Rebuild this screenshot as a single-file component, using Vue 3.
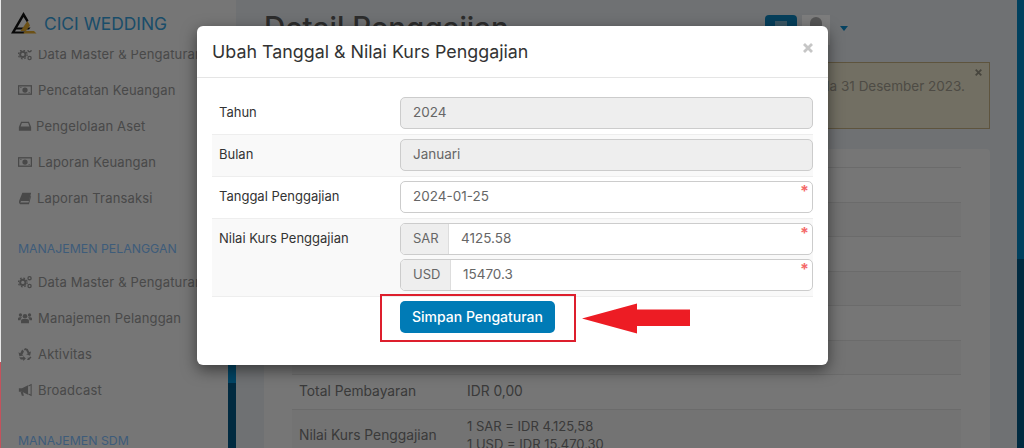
<script setup>
const groups = [
  {
    title: '',
    items: [
      { label: 'Data Master & Pengaturan', icon: 'cogs' },
      { label: 'Pencatatan Keuangan', icon: 'money' },
      { label: 'Pengelolaan Aset', icon: 'inbox', space: 'tight' },
      { label: 'Laporan Keuangan', icon: 'money' },
      { label: 'Laporan Transaksi', icon: 'book', space: 'mid' }
    ]
  },
  {
    title: 'MANAJEMEN PELANGGAN',
    items: [
      { label: 'Data Master & Pengaturan', icon: 'cogs' },
      { label: 'Manajemen Pelanggan', icon: 'users' },
      { label: 'Aktivitas', icon: 'recycle' },
      { label: 'Broadcast', icon: 'bullhorn' }
    ]
  },
  { title: 'MANAJEMEN SDM', items: [] }
]

const blankRows = [1, 2, 3, 4, 5, 6]
</script>

<template>
  <div class="page">
    <div class="edge"><i class="edge-top"></i><i class="edge-bottom"></i></div>

    <div class="app">
      <aside class="sidebar">
        <div class="brand">
          <svg class="logo" viewBox="0 0 26 22" width="26" height="22">
            <path d="M12.5 0 L0 21.5 H13 L14.5 19.5 H4 L12.5 5 L16 10.5 L17.5 8.5 Z" fill="#111" />
            <path d="M5 15.5 H19.5 L18 17.5 H5 Z" fill="#111" />
            <path d="M9.5 19 L16.5 9 L19 13.5 L15 19 Z" fill="#d9a22c" />
            <path d="M12 21.5 L14 19 H23 L25.5 21.5 Z" fill="#d9a22c" />
          </svg>
          <span class="brand-name">CICI WEDDING</span>
        </div>
        <div class="side-body">
          <nav class="nav">
            <section v-for="(group, g) in groups" :key="g" class="group">
              <h4 v-if="group.title" class="group-title">{{ group.title }}</h4>
              <a v-for="item in group.items" :key="item.label + item.icon" class="item" :class="item.space">
                <svg class="ico" viewBox="0 0 16 16" width="14" height="14">
                  <template v-if="item.icon === 'cogs'">
                    <circle cx="5.5" cy="8.5" r="3" fill="none" stroke="currentColor" stroke-width="2.2" />
                    <circle cx="5.5" cy="8.5" r="5" fill="none" stroke="currentColor" stroke-width="1.4" stroke-dasharray="2 1.93" />
                    <circle cx="13.2" cy="3.6" r="1.8" fill="none" stroke="currentColor" stroke-width="1.5" />
                    <circle cx="13.2" cy="12.6" r="1.8" fill="none" stroke="currentColor" stroke-width="1.5" />
                  </template>
                  <template v-else-if="item.icon === 'money'">
                    <rect x=".7" y="3.2" width="14.6" height="9.6" fill="none" stroke="currentColor" stroke-width="1.5" />
                    <circle cx="8" cy="8" r="3" fill="currentColor" />
                    <path d="M2.5 5 H4 M12 11 H13.5" stroke="currentColor" />
                  </template>
                  <template v-else-if="item.icon === 'inbox'">
                    <path d="M3.5 3 H12.5 L15 9 V13.5 H1 V9 Z" fill="currentColor" />
                    <path d="M4.4 4.6 H11.6 L13 8.6 H3 Z" fill="#eaeaea" />
                  </template>
                  <template v-else-if="item.icon === 'book'">
                    <path d="M5 2 H15 L12.5 11.5 H3.5 L2.6 13 H12 L14.5 5 L15 6 L12.5 15 H2.5 Q.6 14.5 1.2 11.5 Z" fill="currentColor" />
                  </template>
                  <template v-else-if="item.icon === 'users'">
                    <circle cx="8" cy="6" r="2.6" fill="currentColor" />
                    <circle cx="2.8" cy="4.6" r="1.9" fill="currentColor" />
                    <circle cx="13.2" cy="4.6" r="1.9" fill="currentColor" />
                    <path d="M3.5 14 V10.5 Q4 9 6 9 H10 Q12 9 12.5 10.5 V14 Z" fill="currentColor" />
                    <path d="M0 10.5 V8.4 Q.4 7 2 7 H4.6 L3 9 V10.5 Z M16 10.5 V8.4 Q15.6 7 14 7 H11.4 L13 9 V10.5 Z" fill="currentColor" />
                  </template>
                  <template v-else-if="item.icon === 'recycle'">
                    <path d="M8 1 L11.2 2.2 L12.8 5.8 L14.8 5 L13.8 10 L9.4 8.2 L11.2 7.4 L9.2 3.6 H6.4 Z" fill="currentColor" />
                    <path d="M4.8 2.8 L6.8 5.2 L4.9 8.8 L6.4 9.8 L1.6 10.7 L.6 6 L2.5 7 Z" fill="currentColor" />
                    <path d="M1.4 11.8 H6 V10.2 L9 13.2 L6 16 V14.4 H3.2 Z M14 10.8 L15.4 11.8 L12.8 14.8 H10.2 L11.4 13 L10.6 12.4 H12.6 Z" fill="currentColor" />
                  </template>
                  <template v-else>
                    <path d="M1 6 H4.5 L11.5 2.6 V13.4 L4.5 10 H1 Z" fill="currentColor" />
                    <path d="M3 10 H5.4 L6.8 14.6 H4.4 Z" fill="currentColor" />
                    <path d="M12 3.4 L15 1.8 V14.2 L12 12.6" fill="none" stroke="currentColor" stroke-width="1.2" />
                  </template>
                </svg>
                <span>{{ item.label }}</span>
              </a>
            </section>
          </nav>
          <div class="rail"><i class="rail-light"></i><i class="rail-dark"></i></div>
        </div>
      </aside>

      <main class="main">
        <header class="topbar">
          <h1 class="page-title">Detail Penggajian</h1>
          <div class="top-actions">
            <span class="top-btn"><i></i></span>
            <span class="avatar"><i></i></span>
            <span class="caret"></span>
          </div>
        </header>

        <div class="alert">
          <span class="alert-text">Penggajian bulan ini dihitung berdasarkan data sampai pada 31 Desember 2023.</span>
          <svg class="alert-x" viewBox="0 0 10 10" width="7" height="7">
            <path d="M1 1 L9 9 M9 1 L1 9" stroke="currentColor" stroke-width="2.6" />
          </svg>
        </div>

        <div class="card">
          <div v-for="n in blankRows" :key="n" class="row"></div>
          <div class="row">
            <span class="row-label">Total Pembayaran</span>
            <span class="row-value">IDR 0,00</span>
          </div>
          <div class="row row-last">
            <span class="row-label">Nilai Kurs Penggajian</span>
            <span class="rates">1 SAR = IDR 4.125,58<br />1 USD = IDR 15.470,30</span>
          </div>
        </div>
      </main>

      <div class="rail rail-right"><i class="rail-light"></i><i class="rail-dark"></i></div>

      <div class="overlay">
        <div class="modal">
          <div class="modal-header">
            <h3 class="modal-title">Ubah Tanggal &amp; Nilai Kurs Penggajian</h3>
            <svg class="modal-x" viewBox="0 0 10 10" width="10" height="10">
              <path d="M1 1 L9 9 M9 1 L1 9" stroke="currentColor" stroke-width="2.8" />
            </svg>
          </div>

          <div class="modal-body">
            <div class="form-row">
              <label>Tahun</label>
              <div class="fields"><div class="input disabled">2024</div></div>
            </div>
            <div class="form-row striped">
              <label>Bulan</label>
              <div class="fields"><div class="input disabled">Januari</div></div>
            </div>
            <div class="form-row">
              <label>Tanggal Penggajian</label>
              <div class="fields"><div class="input">2024-01-25<b class="req">*</b></div></div>
            </div>
            <div class="form-row striped closing">
              <label>Nilai Kurs Penggajian</label>
              <div class="fields">
                <div class="input group-input">
                  <span class="addon">SAR</span>
                  <span class="value">4125.58</span>
                  <b class="req">*</b>
                </div>
                <div class="input group-input">
                  <span class="addon addon-wide">USD</span>
                  <span class="value">15470.3</span>
                  <b class="req">*</b>
                </div>
              </div>
            </div>
            <div class="actions">
              <button class="save" type="button">Simpan Pengaturan</button>
            </div>
          </div>

          <!-- anotasi screenshot -->
          <div class="mark-box"></div>
          <svg class="mark-arrow" viewBox="0 0 109 31" width="109" height="31">
            <path d="M0 15.5 L55 0.5 V6.5 H108 V23 H55 V30.5 Z" fill="#ed1c24" />
          </svg>
        </div>
      </div>
    </div>
  </div>
</template>

<style>
html, body {
  margin: 0;
  overflow: hidden;
}
</style>

<style scoped>
.page {
  display: flex;
  width: 1024px;
  height: 448px;
  overflow: hidden;
  font-family: Inter, "Noto Sans", sans-serif;
}

.edge {
  display: flex;
  flex-direction: column;
  width: 1px;
  flex: none;
}
.edge-top { height: 362px; background: #e8e8e8; }
.edge-bottom { flex: 1; background: #c4525c; }

.app {
  position: relative;
  display: flex;
  flex: 1;
  min-width: 0;
  background: #dfe3e7;
}

/* sidebar */
.sidebar {
  display: flex;
  flex-direction: column;
  width: 235px;
  flex: none;
  background: #ececec;
}
.brand {
  position: relative;
  z-index: 1;
  display: flex;
  align-items: center;
  box-sizing: border-box;
  height: 50px;
  padding: 0 0 4px 10px;
  background: #ececec;
  flex: none;
}
.brand-name {
  margin-left: 7px;
  font-size: 17.4px;
  color: #359ad4;
}
.side-body {
  display: flex;
  flex: 1;
  min-height: 0;
}
.nav {
  flex: 1;
  min-width: 0;
  margin-top: -14px;
}
.group-title {
  margin: 18px 0 0;
  padding-left: 17px;
  height: 30px;
  line-height: 30px;
  font-size: 12.3px;
  font-weight: 400;
  color: #7cb8f4;
  white-space: nowrap;
}
.item {
  display: flex;
  align-items: center;
  gap: 6px;
  height: 36px;
  padding-left: 17px;
  font-size: 13px;
  letter-spacing: 0.17px;
  color: #929292;
  white-space: nowrap;
}
.item.tight { gap: 4px; }
.item.mid { gap: 5px; }
.ico { flex: none; }

.rail {
  display: flex;
  flex-direction: column;
  width: 8px;
  flex: none;
}
.rail i { display: block; }
.rail-light { height: 333px; background: #0088c8; }
.rail-dark { flex: 1; background: #005580; }
.rail-right { width: 7px; }
.rail-right .rail-light { height: 259px; background: #0080bc; }

/* main */
.main {
  flex: 1;
  min-width: 0;
}
.topbar {
  display: flex;
  justify-content: space-between;
  height: 62px;
  padding: 0 169px 0 28px;
}
.page-title {
  margin: 9px 0 0;
  font-size: 29.5px;
  font-weight: 500;
  color: #585858;
  white-space: nowrap;
}
.top-actions {
  display: flex;
  align-items: flex-start;
  margin-top: 15px;
}
.top-btn {
  display: block;
  width: 32px;
  height: 30px;
  border-radius: 4px;
  background: #0c7fb6;
}
.top-btn i {
  display: block;
  width: 12px;
  height: 8px;
  margin: 6px auto 0;
  background: #74aecb;
}
.avatar {
  display: block;
  width: 28px;
  height: 30px;
  margin-left: 5px;
  background: #fafafa;
}
.avatar i {
  display: block;
  width: 12px;
  height: 22px;
  margin: 2px auto 0;
  border-radius: 6px;
  background: #aaa;
}
.caret {
  width: 0;
  height: 0;
  margin: 11px 0 0 10px;
  border-left: 4px solid transparent;
  border-right: 4px solid transparent;
  border-top: 5px solid #0c86c4;
}

.alert {
  position: relative;
  box-sizing: border-box;
  height: 67px;
  margin: 0 27px 20px 28px;
  padding: 13px 24px 0 0;
  text-align: right;
  background: #e4dfc6;
  border: 1px solid #bda87c;
  font-size: 13.5px;
  line-height: 20px;
  color: #9c978a;
  white-space: nowrap;
}
.alert-x {
  position: absolute;
  top: 6px;
  right: 7px;
  color: #8f8b7c;
}

.card {
  height: 320px;
  margin: 0 27px 0 28px;
  padding: 18px 29px 0 28px;
  border-radius: 4px;
  background: #ececec;
  font-size: 13px;
  color: #747474;
}
.row {
  display: flex;
  align-items: center;
  box-sizing: border-box;
  height: 34.5px;
  padding: 0 0 2px 7px;
  border-top: 1px solid #d6d6d6;
}
.row:nth-child(even) { background: #e6e6e6; }
.row-label { width: 168px; flex: none; font-size: 13.8px; }
.row-value { font-size: 13.8px; }
.row-last { height: 52px; padding-bottom: 0; }
.rates { line-height: 18px; }

/* modal */
.overlay {
  position: absolute;
  inset: 0;
  z-index: 5;
  display: flex;
  justify-content: center;
  align-items: flex-start;
  background: rgba(0, 0, 0, 0.5);
}
.modal {
  position: relative;
  width: 631px;
  margin-top: 26px;
  border-radius: 6px;
  background: #fff;
  box-shadow: 0 5px 15px rgba(0, 0, 0, 0.5);
}
.modal-header {
  display: flex;
  align-items: center;
  justify-content: space-between;
  box-sizing: border-box;
  height: 52px;
  padding: 0 15px;
  border-bottom: 1px solid #e5e5e5;
}
.modal-title {
  margin: 0;
  font-size: 17.85px;
  font-weight: 400;
  color: #333;
  white-space: nowrap;
}
.modal-x { color: #c6c6c6; margin-top: -8px; }

.modal-body {
  padding: 14px 15px 32px;
}
.form-row {
  display: flex;
  padding: 4px 0 5px;
  border-top: 1px solid #eee;
}
.form-row:first-child { border-top-color: transparent; }
.form-row.striped { background: #f9f9f9; }
.form-row.closing { border-bottom: 1px solid #eee; }
.form-row label {
  box-sizing: border-box;
  width: 188px;
  flex: none;
  padding-left: 7px;
  line-height: 30px;
  font-size: 13px;
  color: #333;
}
.fields {
  display: flex;
  flex-direction: column;
  gap: 4px;
  flex: 1;
  min-width: 0;
}
.input {
  position: relative;
  box-sizing: border-box;
  height: 32px;
  padding: 0 12px;
  border: 1px solid #ccc;
  border-radius: 5px;
  background: #fff;
  font-size: 13.5px;
  line-height: 28px;
  color: #666;
}
.input.disabled { background: #eee; }
.group-input {
  display: flex;
  padding: 0;
}
.addon {
  box-sizing: border-box;
  width: 48px;
  padding-left: 12px;
  border-right: 1px solid #ddd;
  border-radius: 4px 0 0 4px;
  background: #eee;
  font-size: 13px;
}
.addon-wide { width: 50px; }
.value { padding-left: 12px; }
.req {
  position: absolute;
  top: -1px;
  right: 3px;
  font-size: 16px;
  line-height: 20px;
  font-weight: 700;
  color: #f46a6a;
}
.actions {
  padding: 4px 0 0 188px;
}
.save {
  display: block;
  box-sizing: border-box;
  width: 155px;
  height: 32px;
  padding: 0 0 2px;
  border: 0;
  border-radius: 5px;
  background: #007bb6;
  font-family: inherit;
  font-size: 14px;
  font-weight: 500;
  color: #fff;
}

.mark-box {
  position: absolute;
  left: 183px;
  top: 268px;
  box-sizing: border-box;
  width: 196px;
  height: 48px;
  border: 2px solid #dd1f2d;
}
.mark-arrow {
  position: absolute;
  left: 385px;
  top: 277px;
}
</style>
